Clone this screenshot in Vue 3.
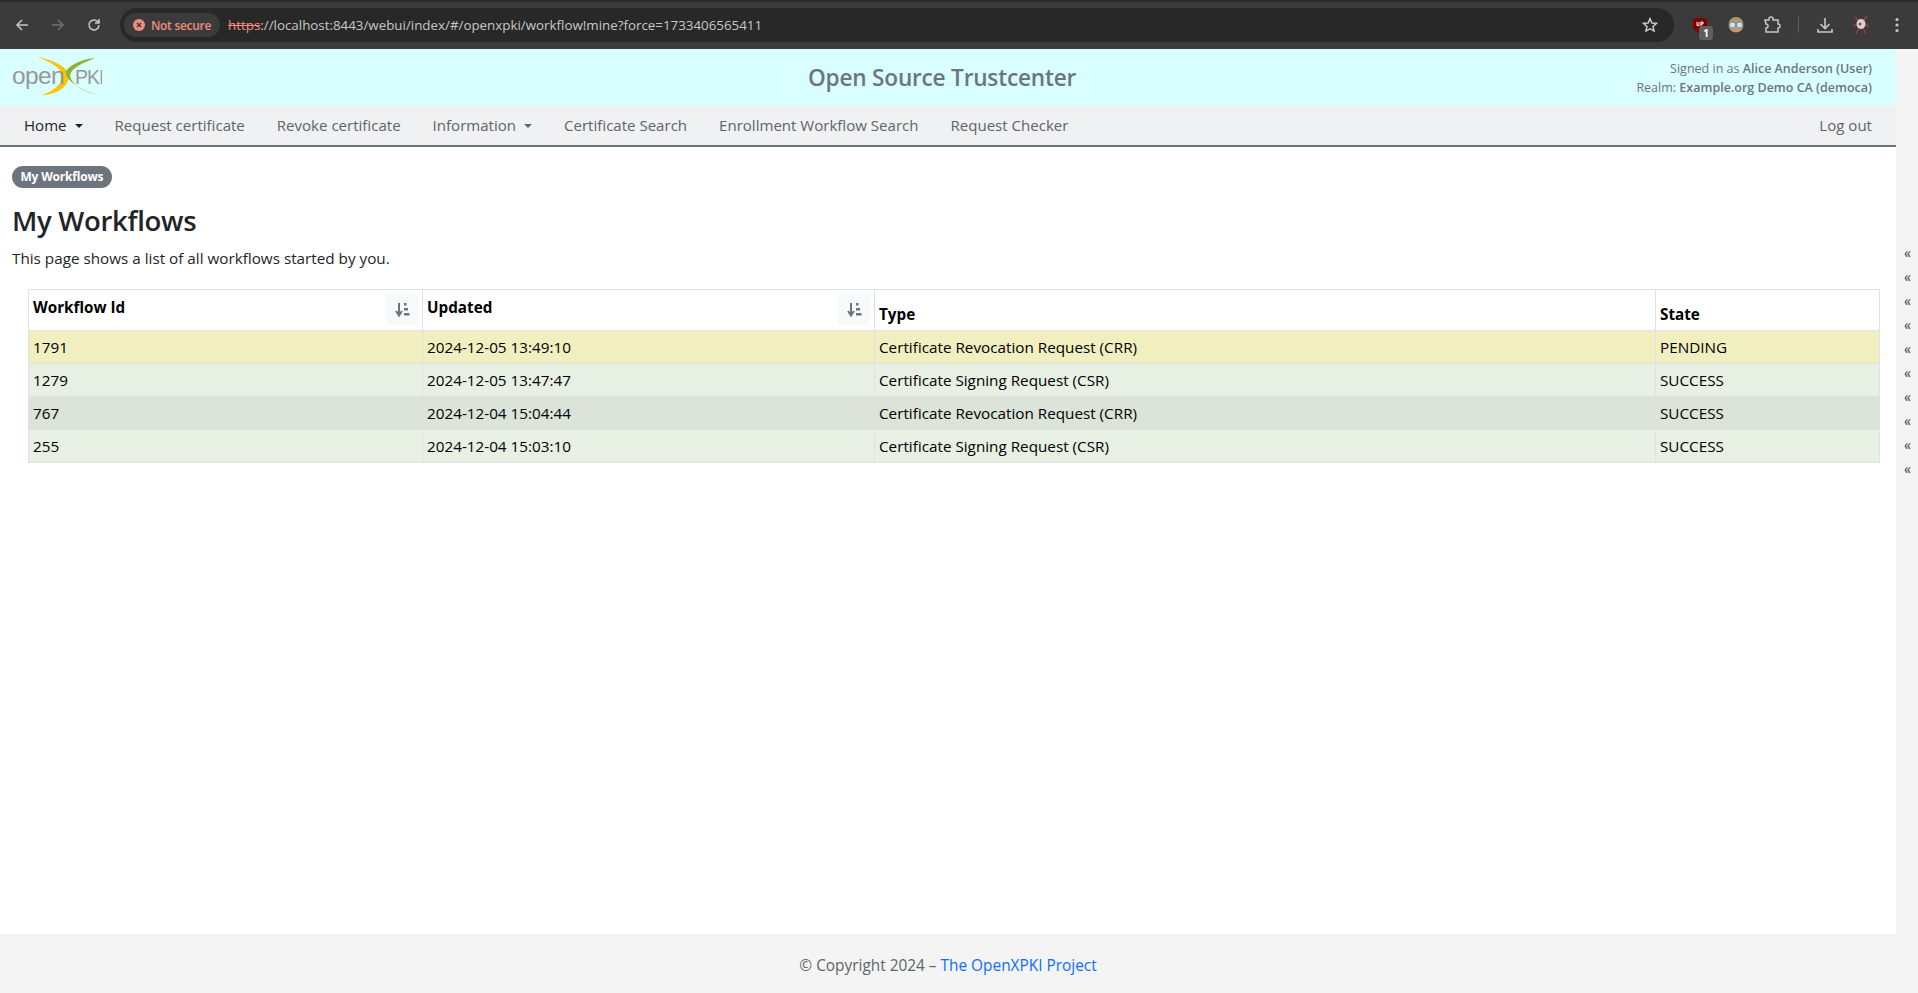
<template>
  <div class="page">
    <div class="chrome">
      <div class="tabstrip"></div>
      <div class="toolbar">
        <button class="tool">
          <svg width="16" height="16" viewBox="0 0 16 16"><path d="M14 8H3M8 3 3 8l5 5" fill="none" stroke="#c7c7c7" stroke-width="1.5"/></svg>
        </button>
        <button class="tool">
          <svg width="16" height="16" viewBox="0 0 16 16"><path d="M2 8h11M8 3l5 5-5 5" fill="none" stroke="#707070" stroke-width="1.5"/></svg>
        </button>
        <button class="tool">
          <svg width="16" height="16" viewBox="0 0 16 16"><path d="M13 8a5 5 0 1 1-1.5-3.6L13 6M13 2v4H9" fill="none" stroke="#c7c7c7" stroke-width="1.5"/></svg>
        </button>
        <div class="omnibox">
          <div class="secure-chip">
            <svg width="12" height="12" viewBox="0 0 12 12"><circle cx="6" cy="6" r="6" fill="#f28b82"/><path d="M4 4l4 4M8 4 4 8" stroke="#3a3a3a" stroke-width="1.4"/></svg>
            <span>Not secure</span>
          </div>
          <div class="url"><span class="scheme">https</span>://localhost:8443/webui/index/#/openxpki/workflow!mine?force=1733406565411</div>
          <svg class="star" width="16" height="16" viewBox="0 0 16 16"><path d="M8 1.6 9.9 6l4.7.4-3.6 3.1 1.1 4.6L8 11.7l-4.1 2.4L5 9.5 1.4 6.4 6.1 6Z" fill="none" stroke="#d0d0d0" stroke-width="1.4"/></svg>
        </div>
        <div class="extensions">
          <div class="ext ext-ublock">
            <svg width="16" height="17" viewBox="0 0 16 17"><path d="M1 2.5 8 .5l7 2v6c0 4-3.5 6.5-7 8-3.5-1.5-7-4-7-8Z" fill="#800000"/><path d="M5 5v3.500h2V5M9 9V5h2v2H9" fill="none" stroke="#fff" stroke-width="1"/></svg>
            <span class="ext-badge">1</span>
          </div>
          <div class="ext">
            <svg width="18" height="16" viewBox="0 0 18 16"><circle cx="9" cy="8" r="7.5" fill="#c99770"/><path d="M2 6a7 6 0 0 1 14 0Z" fill="#a89a6e"/><circle cx="5.5" cy="8" r="3" fill="#cfe7ee" stroke="#6f8f9c"/><circle cx="12.5" cy="8" r="3" fill="#cfe7ee" stroke="#6f8f9c"/></svg>
          </div>
          <div class="ext">
            <svg width="18" height="18" viewBox="0 0 18 18"><path d="M2 4h4V3a2 2 0 0 1 4 0v1h5v4a2 2 0 0 1 0 4v4H3v-4a2 2 0 0 0 0-4Z" fill="none" stroke="#c7c7c7" stroke-width="1.5"/></svg>
          </div>
          <div class="divider"></div>
          <div class="ext">
            <svg width="18" height="18" viewBox="0 0 18 18"><path d="M9 2v10M4.5 8 9 12.500 13.500 8M2 13v3h14v-3" fill="none" stroke="#c7c7c7" stroke-width="1.6"/></svg>
          </div>
          <div class="ext">
            <svg width="18" height="20" viewBox="0 0 18 20"><path d="M3 2l4 4M15 1l-4 5M4 19l3-6M14 19l-3-6M1 11l4-2M17 12l-4-3" stroke="#b03a3a" stroke-width="1.3"/><ellipse cx="9" cy="9" rx="4.500" ry="5" fill="#d8d2d2"/><circle cx="8" cy="9" r="1.5" fill="#8a4a4a"/></svg>
          </div>
          <div class="ext">
            <svg width="4" height="16" viewBox="0 0 4 16"><circle cx="2" cy="2.5" r="1.6" fill="#c7c7c7"/><circle cx="2" cy="8" r="1.6" fill="#c7c7c7"/><circle cx="2" cy="13.5" r="1.6" fill="#c7c7c7"/></svg>
          </div>
        </div>
      </div>
    </div>

    <div class="body-row">
      <div class="main-col">
        <header class="brand">
          <div class="logo">
            <svg width="92" height="44" viewBox="0 0 92 44">
              <path d="M28 3C42 6 58 12 59 22 59 33 46 41 32 41 44 37 52 30 52 22 52 14 40 8 28 3Z" fill="#f5c50f"/>
              <path d="M85 4C74 5 62 9 56 17 54 26 72 37 90 42 74 38 62 31 60 22 60 15 72 9 85 4Z" fill="#8db32b"/>
              <text x="2" y="29.5" class="logo-open">open</text>
              <text x="65" y="29.5" class="logo-pki">PKI</text>
            </svg>
          </div>
          <div class="brand-title">Open Source Trustcenter</div>
          <div class="user-info">
            <div>Signed in as <b>Alice Anderson (User)</b></div>
            <div>Realm: <b>Example.org Demo CA (democa)</b></div>
          </div>
        </header>

        <nav class="navbar">
          <a
            v-for="item in navItems"
            :key="item.label"
            class="nav-link"
            :class="{ active: item.active, caret: item.caret }"
          >{{ item.label }}</a>
          <a class="nav-link logout">Log out</a>
        </nav>

        <main class="content">
          <div class="crumbs"><span class="pill">My Workflows</span></div>
          <h3 class="title">My Workflows</h3>
          <p class="desc">This page shows a list of all workflows started by you.</p>

          <div class="table-wrap">
            <table class="grid">
              <colgroup>
                <col class="col-id" />
                <col class="col-updated" />
                <col class="col-type" />
                <col class="col-state" />
              </colgroup>
              <thead>
                <tr>
                  <th class="sortable">
                    <div class="th-inner">
                      <span>Workflow Id</span>
                      <button class="sort-btn">
                        <svg width="15" height="15" viewBox="0 0 15 15"><path d="M4 1v11M1 9l3 4.5L7 9" fill="none" stroke="#6c757d" stroke-width="2"/><path d="M9 1h2.5v2.5H9zM9 6h4v2.5H9zM9 11h5.5v2.5H9z" fill="#6c757d"/></svg>
                      </button>
                    </div>
                  </th>
                  <th class="sortable">
                    <div class="th-inner">
                      <span>Updated</span>
                      <button class="sort-btn">
                        <svg width="15" height="15" viewBox="0 0 15 15"><path d="M4 1v11M1 9l3 4.5L7 9" fill="none" stroke="#6c757d" stroke-width="2"/><path d="M9 1h2.5v2.5H9zM9 6h4v2.5H9zM9 11h5.5v2.5H9z" fill="#6c757d"/></svg>
                      </button>
                    </div>
                  </th>
                  <th>Type</th>
                  <th>State</th>
                </tr>
              </thead>
              <tbody>
                <tr v-for="row in rows" :key="row.id" :class="row.cls">
                  <td>{{ row.id }}</td>
                  <td>{{ row.updated }}</td>
                  <td>{{ row.type }}</td>
                  <td>{{ row.state }}</td>
                </tr>
              </tbody>
            </table>
          </div>
        </main>
      </div>

      <aside class="side-strip">
        <span v-for="n in 10" :key="n" class="collapse-mark">«</span>
      </aside>
    </div>

    <footer class="footer">
      © Copyright 2024 – <a class="footer-link">The OpenXPKI Project</a>
    </footer>
  </div>
</template>

<script setup>
const navItems = [
  { label: 'Home', active: true, caret: true },
  { label: 'Request certificate' },
  { label: 'Revoke certificate' },
  { label: 'Information', caret: true },
  { label: 'Certificate Search' },
  { label: 'Enrollment Workflow Search' },
  { label: 'Request Checker' }
]

const rows = [
  { id: '1791', updated: '2024-12-05 13:49:10', type: 'Certificate Revocation Request (CRR)', state: 'PENDING', cls: 'pending' },
  { id: '1279', updated: '2024-12-05 13:47:47', type: 'Certificate Signing Request (CSR)', state: 'SUCCESS', cls: 'ok' },
  { id: '767', updated: '2024-12-04 15:04:44', type: 'Certificate Revocation Request (CRR)', state: 'SUCCESS', cls: 'ok-dark' },
  { id: '255', updated: '2024-12-04 15:03:10', type: 'Certificate Signing Request (CSR)', state: 'SUCCESS', cls: 'ok' }
]
</script>

<style>
html, body {
  margin: 0;
  background: #fff;
}
</style>

<style scoped>
.page {
  width: 1918px;
  height: 993px;
  display: flex;
  flex-direction: column;
  overflow: hidden;
  font-family: "Open Sans", "Noto Sans", sans-serif;
  font-size: 15.25px;
  color: #212529;
}

.chrome {
  height: 49px;
  flex: none;
  background: #3b3b3b;
  display: flex;
  flex-direction: column;
}

.tabstrip {
  height: 2px;
  background: #2a2a2a;
}

.toolbar {
  flex: 1;
  display: flex;
  align-items: center;
  padding: 0 0 1px 4px;
}

.tool {
  width: 36px;
  height: 30px;
  padding: 0;
  display: flex;
  align-items: center;
  justify-content: center;
  background: none;
  border: 0;
}

.omnibox {
  width: 1554px;
  height: 34px;
  margin-left: 8px;
  box-sizing: border-box;
  border-radius: 17px;
  background: #282828;
  display: flex;
  align-items: center;
  padding: 0 16px 0 4px;
}

.secure-chip {
  height: 24px;
  padding: 0 9px 0 9px;
  border-radius: 12px;
  background: #3b3b3b;
  display: flex;
  align-items: center;
  gap: 6px;
  color: #f28b82;
  font-size: 12px;
  font-weight: 600;
  letter-spacing: -0.3px;
}

.url {
  flex: 1;
  margin-left: 8px;
  color: #c7c7c7;
  font-size: 13.35px;
  white-space: nowrap;
}

.scheme {
  color: #f28b82;
  text-decoration: line-through;
}

.extensions {
  display: flex;
  align-items: center;
  margin-left: 8px;
  gap: 0;
}

.ext {
  width: 36px;
  height: 30px;
  display: flex;
  align-items: center;
  justify-content: center;
  position: relative;
}

.ext-badge {
  position: absolute;
  right: 5px;
  bottom: 0;
  width: 14px;
  height: 14px;
  border-radius: 3px;
  background: #5f5f5f;
  color: #fff;
  font-size: 10px;
  font-weight: 700;
  line-height: 14px;
  text-align: center;
}

.divider {
  width: 1px;
  height: 16px;
  background: #5f5f5f;
  margin: 0 8px 0 8px;
}

.body-row {
  flex: 1;
  min-height: 0;
  display: flex;
}

.main-col {
  flex: 1;
  min-width: 0;
  display: flex;
  flex-direction: column;
}

.side-strip {
  width: 22px;
  flex: none;
  box-sizing: border-box;
  background: #f4f4f4;
  display: flex;
  flex-direction: column;
  align-items: center;
  padding: 192px 0 0 1px;
}

.collapse-mark {
  height: 24px;
  line-height: 24px;
  font-size: 14px;
  color: #33415c;
}

.brand {
  height: 56px;
  flex: none;
  background: #d9ffff;
  display: flex;
  align-items: center;
  position: relative;
  padding: 0 24px 0 10px;
}

.logo {
  width: 92px;
  height: 44px;
  margin-top: -2px;
}

.logo-open,
.logo-pki {
  font-family: "Liberation Sans", sans-serif;
  fill: #979797;
  font-size: 24.5px;
  letter-spacing: -0.6px;
}

.logo-pki {
  font-size: 19.5px;
  letter-spacing: -1px;
}

.brand-title {
  flex: 1;
  text-align: center;
  font-size: 22.6px;
  font-weight: 600;
  color: #6c757d;
  letter-spacing: -0.2px;
  margin: 1px 84px 0 -6px;
}

.user-info {
  position: absolute;
  right: 24px;
  top: 10px;
  text-align: right;
  font-size: 12.5px;
  line-height: 19px;
  color: #6c757d;
}

.user-info b {
  font-weight: 600;
}

.navbar {
  height: 42px;
  flex: none;
  box-sizing: border-box;
  background: #f0f1f3;
  border-bottom: 2px solid #6c757d;
  display: flex;
  align-items: center;
  padding: 0 8px 0 24px;
  gap: 32px;
}

.nav-link {
  color: #5e6469;
  font-size: 15.05px;
  white-space: nowrap;
}

.nav-link.active {
  color: #212529;
}

.nav-link.caret::after {
  content: "";
  display: inline-block;
  margin-left: 8px;
  vertical-align: 3px;
  border-top: 4.5px solid currentColor;
  border-left: 4.5px solid transparent;
  border-right: 4.5px solid transparent;
}

.logout {
  margin-left: auto;
  margin-right: 16px;
}

.content {
  flex: 1;
  padding: 18px 16px 0 12px;
}

.crumbs {
  height: 22px;
}

.pill {
  display: inline-block;
  height: 22px;
  line-height: 22px;
  padding: 0 8.5px;
  border-radius: 11px;
  background: #6c757d;
  color: #fff;
  font-size: 12px;
  font-weight: 700;
  letter-spacing: -0.2px;
}

.title {
  margin: 17px 0 0;
  font-size: 27.5px;
  font-weight: 600;
  line-height: 34px;
  letter-spacing: -0.3px;
  color: #212529;
}

.desc {
  margin: 9px 0 0;
  font-size: 15.25px;
  line-height: 22px;
}

.table-wrap {
  margin: 20px 0 0 16px;
}

.grid {
  width: 1851px;
  table-layout: fixed;
  border-collapse: collapse;
  color: #000;
  font-size: 15.25px;
}

.col-id { width: 394px; }
.col-updated { width: 452px; }
.col-type { width: 781px; }
.col-state { width: 224px; }

.grid th,
.grid td {
  border: 1px solid #dee2e6;
  padding: 0 4px;
  text-align: left;
  box-sizing: border-box;
}

.grid th {
  height: 41px;
  vertical-align: bottom;
  padding-bottom: 6px;
  font-weight: 700;
  background: #fff;
}

.grid th.sortable {
  padding: 0 0 0 4px;
  vertical-align: top;
}

.th-inner {
  display: flex;
  justify-content: space-between;
  padding-top: 4px;
  height: 35px;
}

.th-inner span {
  padding-top: 3px;
}

.sort-btn {
  width: 32px;
  height: 31px;
  margin-right: 4px;
  padding: 0;
  border: 0;
  border-radius: 4px;
  background: #f8f9fa;
  display: flex;
  align-items: center;
  justify-content: center;
}

.grid td {
  height: 33px;
}

tr.pending td { background: #f1efbf; }
tr.ok td { background: #e8efe3; }
tr.ok-dark td { background: #dce3d8; }

.footer {
  height: 59px;
  flex: none;
  box-sizing: border-box;
  padding-right: 22px;
  background: #f4f4f4;
  color: #5e6469;
  text-align: center;
  line-height: 64px;
  font-size: 15.4px;
}

.footer-link {
  color: #0d6efd;
}
</style>
